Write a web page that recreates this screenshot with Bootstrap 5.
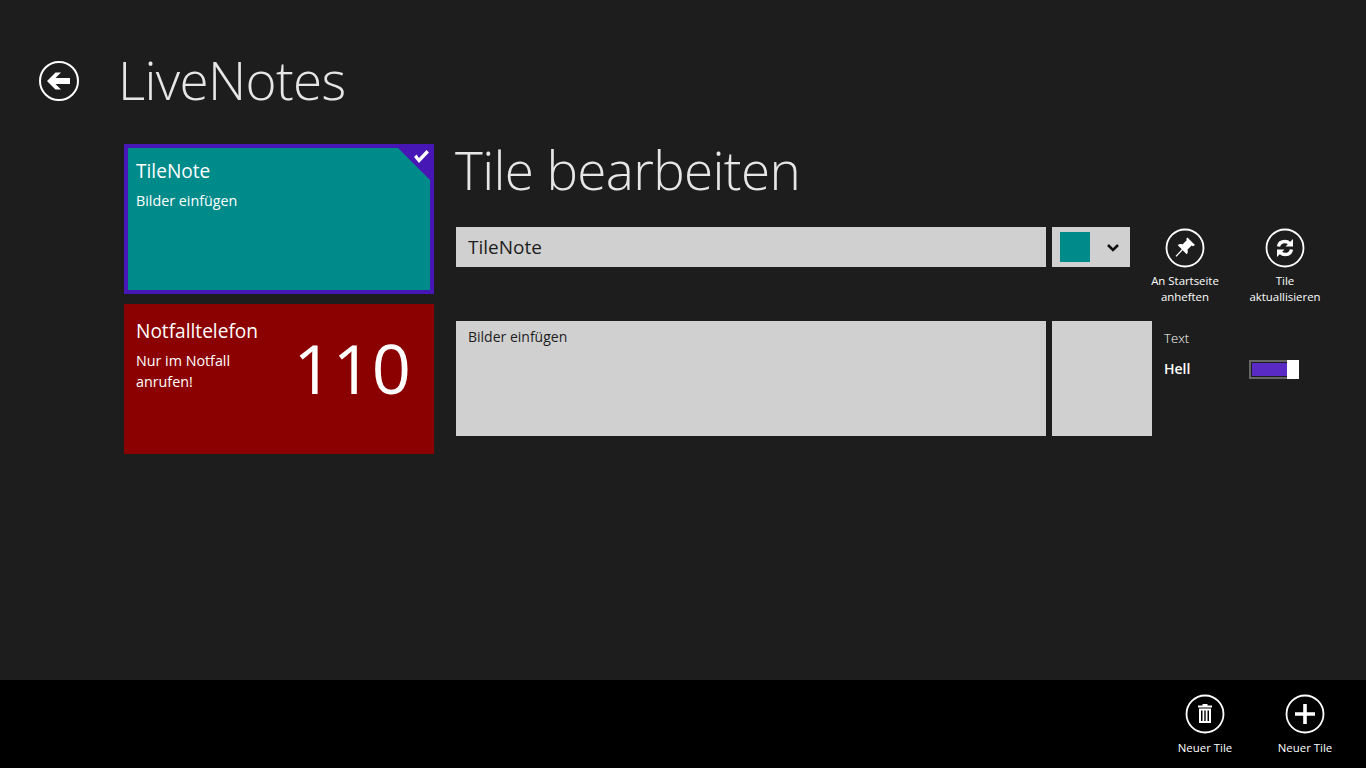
<!DOCTYPE html>
<html lang="de">
<head>
<meta charset="utf-8">
<title>LiveNotes</title>
<link href="https://cdn.jsdelivr.net/npm/bootstrap@5.3.0/dist/css/bootstrap.min.css" rel="stylesheet">
<style>
html,body{height:768px;overflow:hidden}
body{background:#1d1d1d;color:#fff;font-family:"Open Sans","Liberation Sans",sans-serif}
.shell{height:768px}
.top-bar{height:144px;padding-left:39px;padding-top:61px}
.round-btn{width:40px;height:40px;flex:none;padding:0;background:transparent;border:0;display:block}
.round-btn svg{display:block}
.app-title{font-size:53px;font-weight:300;line-height:38px;margin:0 0 0 39px;color:#e6e6e6;letter-spacing:-.65px}
.work{padding-left:124px}
.tile-col{width:310px;flex:none;gap:10px}
.tile{height:150px;padding:14px 12px;position:relative;color:#fff}
.tile-teal{background:#008b8b;outline:4px solid #4617b4;outline-offset:-4px}
.tile-red{background:#8b0000}
.tile-head{font-size:19.100px;line-height:26px;margin:0 0 6px}
.tile-sub{font-size:14.300px;line-height:21px;width:130px}
.tile-num{position:absolute;right:23px;top:22px;font-size:68.500px;line-height:84px}
.corner{position:absolute;top:0;right:0}
.editor{margin-left:22px;width:880px}
.edit-title{font-size:53px;font-weight:300;line-height:52px;height:83px;margin:0 0 0 -1px;color:#e6e6e6;letter-spacing:-.65px}
.row-a{height:94px}
.row-b{height:115px}
.field{width:590px;flex:none;border:0;border-radius:0;background:#d0d0d0;color:#1d1d1d;padding:0 12px}
input.field{height:40px;font-size:19px}
textarea.field{height:115px;font-size:14px;line-height:20px;padding-top:6px;resize:none}
.field:focus{background:#d0d0d0;box-shadow:none;color:#1d1d1d}
.picker{width:78px;height:40px;margin-left:6px;background:#d0d0d0;padding:5px 10px 5px 8px}
.swatch{width:30px;height:30px;background:#008b8b}
.action{width:100px;font-size:11.400px;line-height:16px;text-align:center;color:#fff}
.action .round-btn{margin:1px auto 5px}
.action-first{margin-left:5px}
.blank{width:100px;height:115px;margin-left:6px;background:#d0d0d0}
.opts{margin-left:12px;width:135px;font-size:14px;line-height:20px;padding-top:7px}
.opt-plain{font-weight:300;font-size:13.200px}
.opt-line{margin-top:11px;font-weight:600}
.toggle-box{width:50px;height:19px;border:2px solid #666;padding:1px;position:relative}
.toggle-fill{display:block;height:100%;background:#5a2bc4}
.toggle-knob{position:absolute;right:-2px;top:-2px;width:12px;height:19px;background:#fff}
.app-bar{height:88px;background:#000;padding:14px 11px 0 0}
.app-bar .round-btn{margin:0 auto 6px}
</style>
</head>
<body>
<div class="shell d-flex flex-column">
  <header class="top-bar d-flex">
    <button class="round-btn" aria-label="Zurück">
      <svg width="40" height="40" viewBox="0 0 40 40"><circle cx="20" cy="20" r="19" fill="none" stroke="#fff" stroke-width="2"/><path d="M8 20 16.500 11.500H22L16.500 17H31V23H16.500L22 28.500H16.500Z" fill="#fff"/></svg>
    </button>
    <h1 class="app-title">LiveNotes</h1>
  </header>
  <main class="work d-flex flex-grow-1">
    <div class="tile-col d-flex flex-column">
      <div class="tile tile-teal">
        <svg class="corner" width="40" height="40" viewBox="0 0 40 40"><path d="M0 0H40V40Z" fill="#4617b4"/><path d="M20 13 22.500 10.500 25 14 32.500 6 35 8.500 25 19Z" fill="#fff"/></svg>
        <p class="tile-head">TileNote</p>
        <div class="tile-sub w-auto">Bilder einfügen</div>
      </div>
      <div class="tile tile-red">
        <p class="tile-head">Notfalltelefon</p>
        <div class="tile-sub">Nur im Notfall anrufen!</div>
        <div class="tile-num">110</div>
      </div>
    </div>
    <section class="editor">
      <h2 class="edit-title">Tile bearbeiten</h2>
      <div class="row-a d-flex align-items-start">
        <input class="form-control field" type="text" value="TileNote" aria-label="Titel">
        <div class="picker d-flex align-items-center justify-content-between">
          <span class="swatch"></span>
          <svg width="14" height="10" viewBox="0 0 14 10"><path d="M2 3l5 5 5-5" fill="none" stroke="#111" stroke-width="2.600"/></svg>
        </div>
        <div class="action action-first">
          <span class="round-btn">
            <svg width="40" height="40" viewBox="0 0 40 40"><circle cx="20" cy="20" r="18.500" fill="none" stroke="#fff" stroke-width="1.800"/><path d="M22.500 9.500 30 17l-2 1.200-1.300-.8-4.200 4.200c.6 2 .3 3.400-.8 4.600l-4-4-6.200 6.500-1-.8 6.300-6.700-4-4c1.200-1.200 2.800-1.400 4.700-.7l4.200-4.300-.4-1.400z" fill="#fff"/></svg>
          </span>
          An Startseite<br>anheften
        </div>
        <div class="action">
          <span class="round-btn">
            <svg width="40" height="40" viewBox="0 0 40 40"><circle cx="20" cy="20" r="18.500" fill="none" stroke="#fff" stroke-width="1.800"/><path d="M13.500 18.500c.6-3 3.200-5 6.300-5 1.900 0 3.500.7 4.600 1.900" fill="none" stroke="#fff" stroke-width="3.400"/><path d="M28 11v7.500h-7.500z" fill="#fff"/><path d="M26.500 21.500c-.6 3-3.200 5-6.300 5-1.900 0-3.500-.7-4.600-1.900" fill="none" stroke="#fff" stroke-width="3.400"/><path d="M12 29v-7.500h7.500z" fill="#fff"/></svg>
          </span>
          Tile<br>aktuallisieren
        </div>
      </div>
      <div class="row-b d-flex align-items-start">
        <textarea class="form-control field" aria-label="Text">Bilder einfügen</textarea>
        <div class="blank"></div>
        <div class="opts">
          <div class="opt-plain">Text</div>
          <div class="opt-line d-flex justify-content-between align-items-center">
            <span>Hell</span>
            <span class="toggle-box"><span class="toggle-fill"></span><span class="toggle-knob"></span></span>
          </div>
        </div>
      </div>
    </section>
  </main>
  <footer class="app-bar d-flex justify-content-end">
    <div class="action">
      <span class="round-btn">
        <svg width="40" height="40" viewBox="0 0 40 40"><circle cx="20" cy="20" r="18.500" fill="none" stroke="#fff" stroke-width="1.800"/><path d="M17.500 10h5v1.500H27v2H13v-2h4.500zM14 14.500h12V29H14zM16 16.500v10.500h1.500V16.500zM19.300 16.500v10.500h1.400V16.500zM22.500 16.500v10.500H24V16.500z" fill="#fff" fill-rule="evenodd"/></svg>
      </span>
      Neuer Tile
    </div>
    <div class="action">
      <span class="round-btn">
        <svg width="40" height="40" viewBox="0 0 40 40"><circle cx="20" cy="20" r="18.500" fill="none" stroke="#fff" stroke-width="1.800"/><path d="M18.200 10h3.600v8.200H30v3.600h-8.200V30h-3.600v-8.200H10v-3.600h8.200z" fill="#fff"/></svg>
      </span>
      Neuer Tile
    </div>
  </footer>
</div>
<script src="https://cdn.jsdelivr.net/npm/bootstrap@5.3.0/dist/js/bootstrap.bundle.min.js"></script>
</body>
</html>
